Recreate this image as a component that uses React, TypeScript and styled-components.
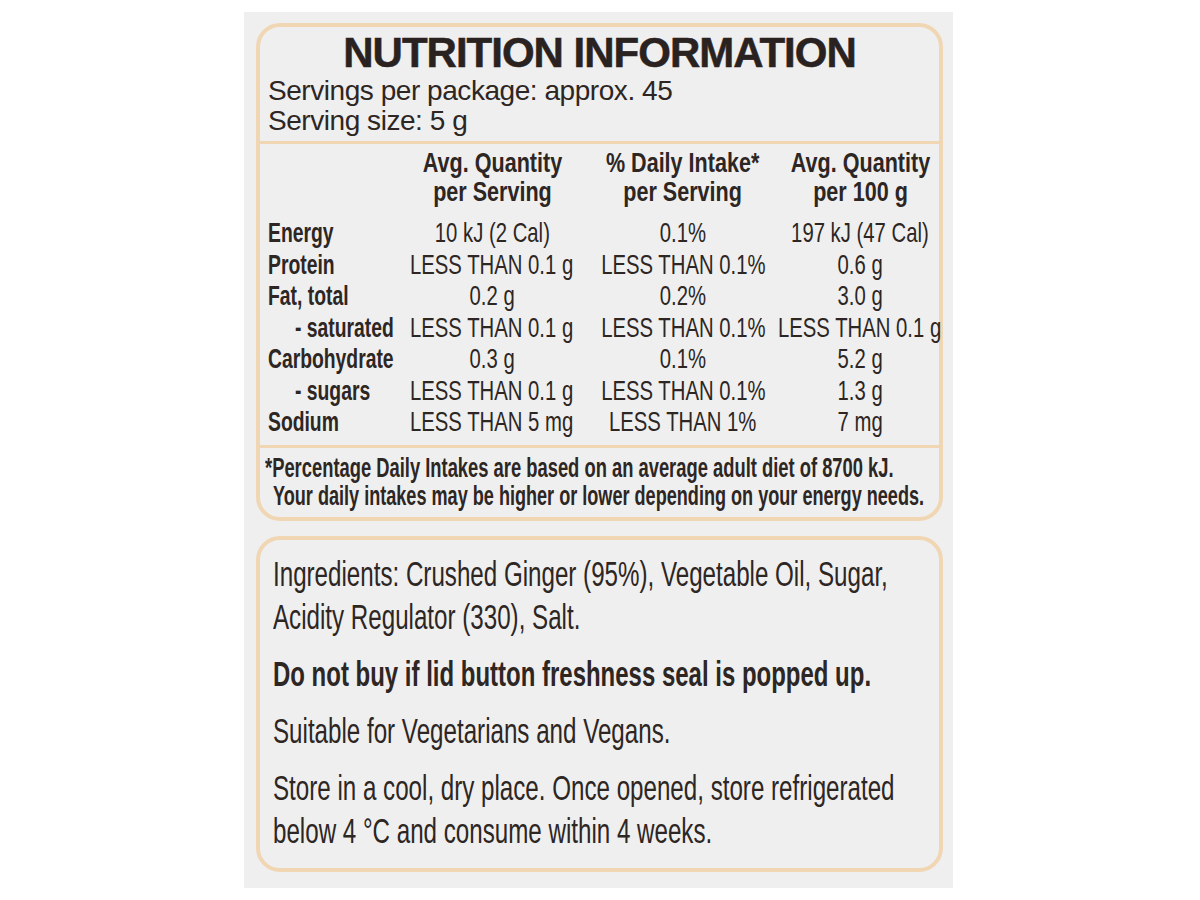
import React from "react";
import styled, { createGlobalStyle } from "styled-components";

const GlobalStyle = createGlobalStyle`
  html, body { margin: 0; padding: 0; background: #ffffff; }
  body { font-family: "Liberation Sans", Arial, Helvetica, sans-serif; color: #2d2623; }
`;

const Page = styled.div`
  width: 1200px;
  height: 900px;
  box-sizing: border-box;
  padding: 12px 0 0 244px;
  background: #ffffff;
  overflow: hidden;
`;

const Label = styled.div`
  width: 709px;
  height: 876px;
  box-sizing: border-box;
  padding: 11px 10px 0 12px;
  background: #efeff0;
  display: flex;
  flex-direction: column;
  gap: 15px;
`;

const Panel = styled.section`
  border: 4px solid #f1d6b3;
  border-radius: 24px;
  display: flex;
  flex-direction: column;
`;

const Head = styled.header`
  padding: 9px 8px 5px 8px;
  display: flex;
  flex-direction: column;
`;

const Title = styled.h1`
  margin: 0 0 6px 0;
  text-align: center;
  font-size: 42px;
  line-height: 34px;
  font-weight: 900;
  letter-spacing: -1px;
  -webkit-text-stroke: 0.5px #2a2220;
  color: #2a2220;
`;

const Serving = styled.div`
  font-size: 28px;
  line-height: 30px;
  letter-spacing: -0.45px;
`;

const Squeeze = styled.span<{ $k: number; $origin?: string }>`
  display: inline-block;
  white-space: nowrap;
  transform: scaleX(${(p) => p.$k});
  transform-origin: ${(p) => p.$origin ?? "left"} center;
`;

const Table = styled.div`
  border-top: 3px solid #f1d6b3;
  padding: 4px 0 7.5px 8px;
  display: grid;
  grid-template-columns: 142px 164px 218px 136px;
`;

const HeadCell = styled.div`
  height: 58px;
  margin-bottom: 11px;
  display: flex;
  justify-content: center;
  font-size: 28px;
  line-height: 29px;
  font-weight: 700;
  text-align: center;
`;

const Cell = styled.div<{ $bold?: boolean; $center?: boolean; $indent?: boolean }>`
  height: 31.5px;
  display: flex;
  justify-content: ${(p) => (p.$center ? "center" : "flex-start")};
  padding-left: ${(p) => (p.$indent ? "27px" : "0")};
  font-size: 28px;
  line-height: 31.5px;
  font-weight: ${(p) => (p.$bold ? 700 : 400)};
`;

const Footnote = styled.footer`
  border-top: 3px solid #f1d6b3;
  padding: 5.5px 0 6px 0;
  display: flex;
  flex-direction: column;
  font-size: 27px;
  line-height: 28.5px;
  font-weight: 700;
`;

const FootLine = styled.div<{ $inset: number }>`
  padding-left: ${(p) => p.$inset}px;
  height: 28.5px;
`;

const Body = styled.div`
  padding: 12px 13px 16px 13px;
  display: flex;
  flex-direction: column;
  gap: 14px;
`;

const Para = styled.p<{ $bold?: boolean }>`
  margin: 0;
  width: max-content;
  white-space: nowrap;
  font-size: 35px;
  line-height: 43px;
  font-weight: ${(p) => (p.$bold ? 700 : 400)};
  transform: scaleX(${(p) => (p.$bold ? 0.685 : 0.69)});
  transform-origin: left center;
`;

type Row = { name: string; sub?: boolean; a: string; b: string; c: string };

const rows: Row[] = [
  { name: "Energy", a: "10 kJ (2 Cal)", b: "0.1%", c: "197 kJ (47 Cal)" },
  { name: "Protein", a: "LESS THAN 0.1 g", b: "LESS THAN 0.1%", c: "0.6 g" },
  { name: "Fat, total", a: "0.2 g", b: "0.2%", c: "3.0 g" },
  { name: "- saturated", sub: true, a: "LESS THAN 0.1 g", b: "LESS THAN 0.1%", c: "LESS THAN 0.1 g" },
  { name: "Carbohydrate", a: "0.3 g", b: "0.1%", c: "5.2 g" },
  { name: "- sugars", sub: true, a: "LESS THAN 0.1 g", b: "LESS THAN 0.1%", c: "1.3 g" },
  { name: "Sodium", a: "LESS THAN 5 mg", b: "LESS THAN 1%", c: "7 mg" },
];

const headers: [string, string][] = [
  ["Avg. Quantity", "per Serving"],
  ["% Daily Intake*", "per Serving"],
  ["Avg. Quantity", "per 100 g"],
];

const REG = 0.725;
const BOLD = 0.69;
const HEAD = 0.77;

export default function App() {
  return (
    <>
      <GlobalStyle />
      <Page>
        <Label>
          <Panel>
            <Head>
              <Title>NUTRITION INFORMATION</Title>
              <Serving>Servings per package: approx. 45</Serving>
              <Serving>Serving size: 5 g</Serving>
            </Head>
            <Table>
              <div />
              {headers.map(([l1, l2], i) => (
                <HeadCell key={i}>
                  <Squeeze $k={HEAD} $origin="center">
                    {l1}
                    <br />
                    {l2}
                  </Squeeze>
                </HeadCell>
              ))}
              {rows.map((r) => (
                <React.Fragment key={r.name}>
                  <Cell $bold $indent={r.sub}>
                    <Squeeze $k={BOLD}>{r.name}</Squeeze>
                  </Cell>
                  <Cell $center>
                    <Squeeze $k={REG} $origin="center">{r.a}</Squeeze>
                  </Cell>
                  <Cell $center>
                    <Squeeze $k={REG} $origin="center">{r.b}</Squeeze>
                  </Cell>
                  <Cell $center>
                    <Squeeze $k={REG} $origin="center">{r.c}</Squeeze>
                  </Cell>
                </React.Fragment>
              ))}
            </Table>
            <Footnote>
              <FootLine $inset={5}>
                <Squeeze $k={0.68}>
                  *Percentage Daily Intakes are based on an average adult diet of 8700 kJ.
                </Squeeze>
              </FootLine>
              <FootLine $inset={13}>
                <Squeeze $k={0.67}>
                  Your daily intakes may be higher or lower depending on your energy needs.
                </Squeeze>
              </FootLine>
            </Footnote>
          </Panel>
          <Panel>
            <Body>
              <Para>
                Ingredients: Crushed Ginger (95%), Vegetable Oil, Sugar,
                <br />
                Acidity Regulator (330), Salt.
              </Para>
              <Para $bold>Do not buy if lid button freshness seal is popped up.</Para>
              <Para>Suitable for Vegetarians and Vegans.</Para>
              <Para>
                Store in a cool, dry place. Once opened, store refrigerated
                <br />
                below 4 °C and consume within 4 weeks.
              </Para>
            </Body>
          </Panel>
        </Label>
      </Page>
    </>
  );
}
